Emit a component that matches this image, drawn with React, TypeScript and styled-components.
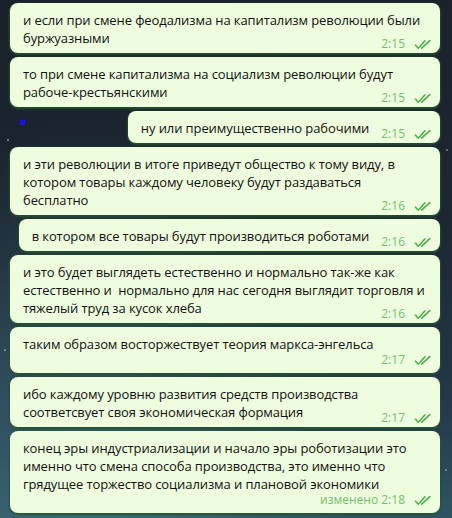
import styled, { createGlobalStyle } from "styled-components";

const GlobalStyle = createGlobalStyle`
    html, body {
        margin: 0;
        padding: 0;
    }
    body {
        width: 452px;
        height: 518px;
        overflow: hidden;
        font-family: "Open Sans", "Noto Sans", sans-serif;
    }
`

const Chat = styled.div`
    width: 452px;
    height: 518px;
    box-sizing: border-box;
    padding: 3px 12px 0 10px;
    display: flex;
    flex-direction: column;
    gap: 4px;
    background:
        radial-gradient(circle at 12px 96px, rgba(255,255,255,0.5) 0 1px, transparent 1.5px),
        radial-gradient(circle at 8px 140px, rgba(255,255,255,0.4) 0 1px, transparent 1.5px),
        radial-gradient(circle at 5px 350px, rgba(255,255,255,0.35) 0 1px, transparent 1.5px),
        radial-gradient(circle at 447px 150px, rgba(255,255,255,0.35) 0 1px, transparent 1.5px),
        radial-gradient(circle at 446px 470px, rgba(255,255,255,0.3) 0 1px, transparent 1.5px),
        radial-gradient(ellipse at 20% 110%, rgba(70, 120, 135, 0.75), transparent 55%),
        linear-gradient(175deg, #1a212b 0%, #1c2631 45%, #24394a 80%, #2f5562 100%);
`

const Row = styled.div`
    display: flex;
    align-items: flex-start;
    justify-content: space-between;
`

const Dot = styled.div`
    width: 5px;
    height: 5px;
    margin: 9px 0 0 10px;
    background: #1414f0;
`

const Bubble = styled.div<{ $full?: boolean }>`
    box-sizing: border-box;
    width: ${p => p.$full ? "100%" : "fit-content"};
    max-width: 430px;
    align-self: flex-end;
    padding: 8px 8px 2px 13px;
    background: #effddf;
    border-radius: 8px;
    box-shadow: 0 1px 2px 1px rgba(38, 82, 48, 0.9);
    color: #111;
    font-size: 13px;
    letter-spacing: -0.1px;
    line-height: 18px;
`

const Text = styled.div`
    display: flow-root;
    white-space: pre-wrap;
`

const Meta = styled.span<{ $below?: boolean }>`
    display: ${p => p.$below ? "flex" : "inline-flex"};
    float: ${p => p.$below ? "none" : "right"};
    justify-content: flex-end;
    align-items: center;
    gap: 9px;
    height: 14px;
    margin: ${p => p.$below ? "0 0 4px 0" : "8px 0 0 12px"};
    color: #72bf6c;
    font-size: 12px;
    letter-spacing: 0;
    line-height: 14px;
    white-space: nowrap;
`

const Checks = () => (
    <svg width="18" height="11" viewBox="0 0 18 11" fill="none" stroke="#4fae4e" strokeWidth="1.6" strokeLinecap="round" strokeLinejoin="round">
        <path d="M1.5 6.2 L4.3 9.2 L11 1.8" />
        <path d="M7.6 9.2 L15.8 1.6" />
    </svg>
)

type Msg = { text: string, time: string, full?: boolean, below?: boolean, dot?: boolean }

const messages: Msg[] = [
    { text: "и если при смене феодализма на капитализм революции были\nбуржуазными", time: "2:15", full: true },
    { text: "то при смене капитализма на социализм революции будут\nрабоче-крестьянскими", time: "2:15", full: true },
    { text: "ну или преимущественно рабочими", time: "2:15", dot: true },
    { text: "и эти революции в итоге приведут общество к тому виду, в\nкотором товары каждому человеку будут раздаваться\nбесплатно", time: "2:16", full: true },
    { text: "в котором все товары будут производиться роботами", time: "2:16" },
    { text: "и это будет выглядеть естественно и нормально так-же как\nестественно и  нормально для нас сегодня выглядит торговля и\nтяжелый труд за кусок хлеба", time: "2:16", full: true },
    { text: "таким образом восторжествует теория маркса-энгельса", time: "2:17", full: true, below: true },
    { text: "ибо каждому уровню развития средств производства\nсоответсвует своя экономическая формация", time: "2:17", full: true },
    { text: "конец эры индустриализации и начало эры роботизации это\nименно что смена способа производства, это именно что\nгрядущее торжество социализма и плановой экономики", time: "изменено 2:18", full: true, below: true },
]

const Message = ({ m }: { m: Msg }) => {
    const meta = <Meta $below={m.below}>{m.time}<Checks /></Meta>
    return (
        <Bubble $full={m.full}>
            <Text>{m.text}{!m.below && meta}</Text>
            {m.below && meta}
        </Bubble>
    )
}

export default function App() {
    return (
        <>
            <GlobalStyle />
            <Chat>
                {messages.map((m, i) => m.dot ? (
                    <Row key={i}>
                        <Dot />
                        <Message m={m} />
                    </Row>
                ) : (
                    <Message key={i} m={m} />
                ))}
            </Chat>
        </>
    )
}
